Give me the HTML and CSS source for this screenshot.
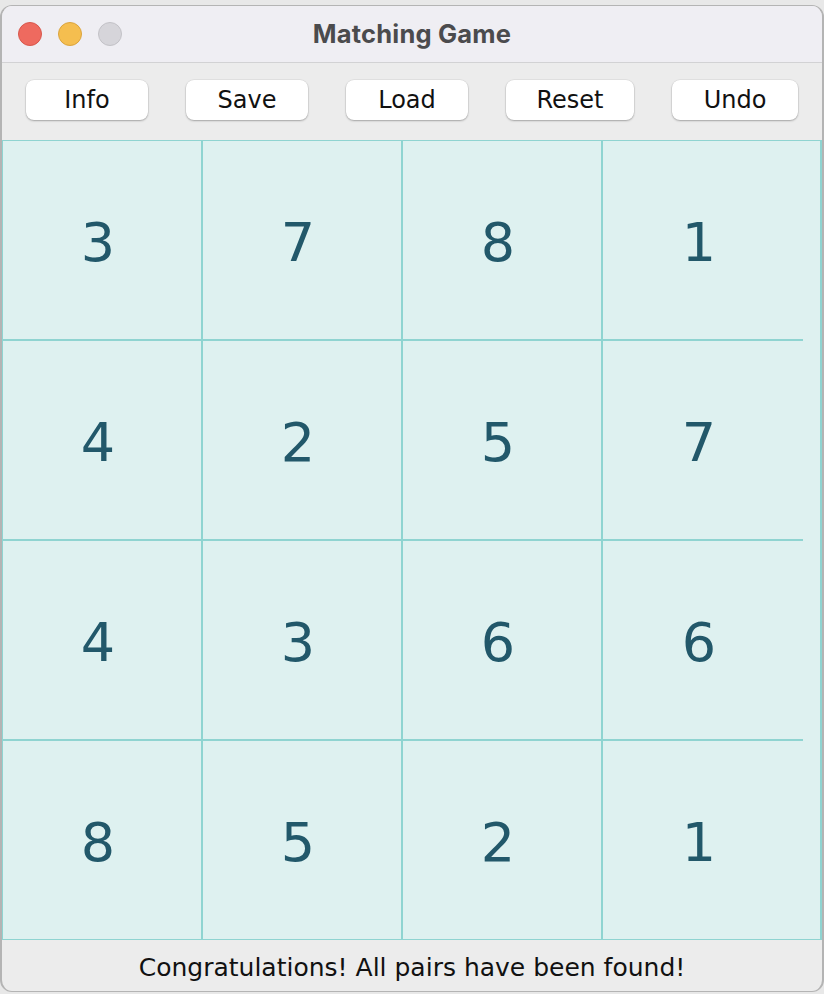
FILE: index.html
```html
<!DOCTYPE html>
<html>
<head>
<meta charset="utf-8">
<title>Matching Game</title>
<link rel="stylesheet" href="styles.css">
</head>
<body>
<div class="window">
  <div class="titlebar">
    <div class="lights">
      <span class="light red"></span>
      <span class="light yellow"></span>
      <span class="light gray"></span>
    </div>
    <div class="title">Matching Game</div>
  </div>
  <div class="toolbar">
    <button class="btn w122">Info</button>
    <button class="btn w122">Save</button>
    <button class="btn w122">Load</button>
    <button class="btn w128">Reset</button>
    <button class="btn w126">Undo</button>
  </div>
  <div class="board">
    <div class="grid">
      <div class="cell">3</div><div class="cell">7</div><div class="cell">8</div><div class="cell">1</div>
      <div class="cell">4</div><div class="cell">2</div><div class="cell">5</div><div class="cell">7</div>
      <div class="cell">4</div><div class="cell">3</div><div class="cell">6</div><div class="cell">6</div>
      <div class="cell">8</div><div class="cell">5</div><div class="cell">2</div><div class="cell">1</div>
    </div>
  </div>
  <div class="status">Congratulations! All pairs have been found!</div>
</div>
</body>
</html>
```
FILE: styles.css
```css
* { box-sizing: border-box; }
html, body { margin: 0; padding: 0; }
body {
  background: #e8e8e8;
  width: 824px;
  height: 994px;
  overflow: hidden;
  padding-top: 5px;
}
.window {
  width: 824px;
  height: 987px;
  border: 1px solid #b4b4b4;
  border-left-width: 2px;
  border-right-width: 2px;
  border-radius: 12px;
  overflow: hidden;
  background: #ececec;
  display: flex;
  flex-direction: column;
}
.titlebar {
  height: 57px;
  flex: none;
  background: #efeef3;
  border-bottom: 1px solid #d2d2d4;
  position: relative;
  display: flex;
  align-items: center;
  justify-content: center;
  padding-bottom: 2px;
}
.lights {
  position: absolute;
  left: 16px;
  top: 16px;
  display: flex;
  gap: 16px;
}
.light {
  width: 24px;
  height: 24px;
  border-radius: 50%;
  display: block;
}
.red { background: #ee6a5f; border: 1px solid #d8574c; }
.yellow { background: #f5be4f; border: 1px solid #dba43d; }
.gray { background: #d6d5da; border: 1px solid #c3c2c7; }
.title {
  font-family: Inter, "Liberation Sans", sans-serif;
  font-weight: 700;
  font-size: 25.5px;
  color: #4b4b4d;
  letter-spacing: 0.2px;
}
.toolbar {
  height: 77px;
  flex: none;
  display: flex;
  justify-content: center;
  gap: 38px;
  padding-top: 17px;
  background: #ececec;
}
.btn {
  height: 40px;
  border: none;
  border-radius: 8px;
  background: #ffffff;
  box-shadow: 0 1px 2px rgba(0,0,0,0.28), 0 0 0 0.5px rgba(0,0,0,0.08);
  font-family: "DejaVu Sans", sans-serif;
  font-size: 24px;
  color: #111;
  padding: 0;
  line-height: 40px;
}
.w122 { width: 122px; }
.w126 { width: 126px; }
.w128 { width: 128px; }
.board {
  width: 820px;
  height: 800px;
  flex: none;
  background: #def1f0;
  border: 1px solid #8fd4d1;
  border-right-width: 2px;
}
.grid {
  display: grid;
  grid-template-columns: 200px 200px 200px 200px;
  grid-template-rows: 200px 200px 200px 198px;
}
.cell {
  border-right: 2px solid #8fd4d1;
  border-bottom: 2px solid #8fd4d1;
  display: flex;
  align-items: center;
  justify-content: center;
  padding-right: 8px;
  padding-top: 4px;
  font-family: "DejaVu Sans", sans-serif;
  font-size: 54px;
  color: #22586a;
}
.cell:nth-child(4n) { border-right: none; }
.cell:nth-child(n+13) { border-bottom: none; }
.status {
  flex: 1;
  display: flex;
  align-items: center;
  justify-content: center;
  font-family: "DejaVu Sans", sans-serif;
  font-size: 25px;
  color: #111;
  padding-top: 4px;
}
```
